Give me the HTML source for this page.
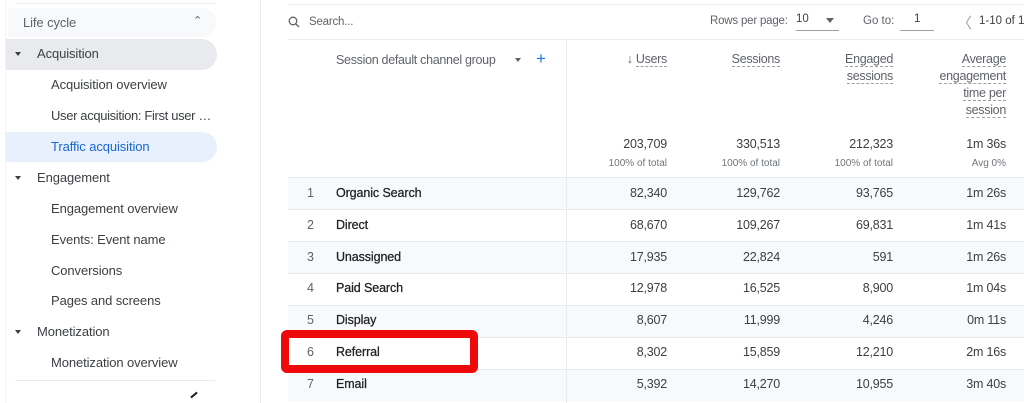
<!DOCTYPE html>
<html><head><meta charset="utf-8"><style>
*{margin:0;padding:0;box-sizing:border-box}
body{width:1024px;height:403px;overflow:hidden;background:#fff;font-family:"Liberation Sans",sans-serif;color:#202124;position:relative}
.a{position:absolute;white-space:nowrap}
.side{font-size:13px;color:#3c4043;letter-spacing:-0.1px}
.n{font-size:12.5px;color:#3c4043;text-align:right;letter-spacing:-0.2px}
.lb{font-size:12.5px;color:#202124;letter-spacing:-0.1px;-webkit-text-stroke:0.25px #202124}
.h{font-size:12.5px;color:#5f6368;text-align:right;line-height:17px;letter-spacing:-0.3px}
.h span{border-bottom:1px dashed #9aa0a6}
.s{font-size:10px;color:#70757a;text-align:right}
.row{position:absolute;left:288px;width:736px;height:32px;border-top:1px solid #e8eaed}
.row.g{background:#f8f9fa}
</style></head><body>
<!-- sidebar -->
<div class="a" style="left:15px;top:3px;width:200px;height:1px;background:#eceff1"></div>
<div class="a" style="left:8px;top:8px;width:208px;height:29px;background:#f8f9fa;border-radius:0 14px 14px 0"></div>
<div class="a side" style="left:23px;top:15px;color:#5f6368">Life cycle</div>
<div class="a" style="left:193px;top:14px;font-size:11px;color:#5f6368">&#8963;</div>
<div class="a" style="left:5px;top:39px;width:212px;height:31px;background:#e8eaed;border-radius:0 16px 16px 0"></div>
<div class="a" style="left:15px;top:52px;border-left:3.5px solid transparent;border-right:3.5px solid transparent;border-top:4px solid #3c4043"></div>
<div class="a side" style="left:37px;top:46px">Acquisition</div>
<div class="a side" style="left:51px;top:77px">Acquisition overview</div>
<div class="a side" style="left:51px;top:108px;letter-spacing:-0.35px">User acquisition: First user …</div>
<div class="a" style="left:5px;top:132px;width:212px;height:30px;background:#e8f0fe;border-radius:0 15px 15px 0"></div>
<div class="a side" style="left:51px;top:139px;color:#1967d2">Traffic acquisition</div>
<div class="a" style="left:15px;top:176px;border-left:3.5px solid transparent;border-right:3.5px solid transparent;border-top:4px solid #3c4043"></div>
<div class="a side" style="left:37px;top:170px">Engagement</div>
<div class="a side" style="left:51px;top:201px">Engagement overview</div>
<div class="a side" style="left:51px;top:232px">Events: Event name</div>
<div class="a side" style="left:51px;top:263px">Conversions</div>
<div class="a side" style="left:51px;top:293px">Pages and screens</div>
<div class="a" style="left:15px;top:330px;border-left:3.5px solid transparent;border-right:3.5px solid transparent;border-top:4px solid #3c4043"></div>
<div class="a side" style="left:37px;top:324px">Monetization</div>
<div class="a side" style="left:51px;top:355px">Monetization overview</div>
<div class="a" style="left:15px;top:380px;width:200px;height:1px;background:#e8eaed"></div>
<div class="a" style="left:190px;top:394px;width:8px;height:2px;background:#202124;transform:rotate(-40deg)"></div>
<div class="a" style="left:5px;top:0;width:1px;height:403px;background:#f1f3f4"></div>
<div class="a" style="left:260px;top:0;width:1px;height:403px;background:#e8eaed"></div>
<!-- top bar -->
<div class="a" style="left:288px;top:4px;width:736px;height:1px;background:#eceff1"></div>
<svg class="a" style="left:288px;top:16px" width="12" height="12" viewBox="0 0 12 12"><circle cx="5" cy="5" r="3.8" fill="none" stroke="#5f6368" stroke-width="1.3"/><line x1="7.8" y1="7.8" x2="11" y2="11" stroke="#5f6368" stroke-width="1.3"/></svg>
<div class="a" style="left:309px;top:16px;font-size:11.5px;color:#5f6368;letter-spacing:-0.2px">Search...</div>
<div class="a" style="left:710px;top:15px;font-size:11.5px;color:#5f6368;letter-spacing:-0.2px">Rows per page:</div>
<div class="a" style="left:796px;top:13px;font-size:11.5px;color:#3c4043">10</div>
<div class="a" style="left:826px;top:18px;border-left:4px solid transparent;border-right:4px solid transparent;border-top:5px solid #5f6368"></div>
<div class="a" style="left:796px;top:30px;width:43px;height:1px;background:#9aa0a6"></div>
<div class="a" style="left:863px;top:15px;font-size:11.5px;color:#5f6368">Go to:</div>
<div class="a" style="left:914px;top:13px;font-size:11.5px;color:#3c4043">1</div>
<div class="a" style="left:900px;top:30px;width:34px;height:1px;background:#9aa0a6"></div>
<div class="a" style="left:957px;top:12px;font-size:15px;color:#9aa0a6">&#12296;</div>
<div class="a" style="left:979px;top:15px;font-size:11.5px;color:#3c4043">1-10 of 1</div>
<div class="a" style="left:288px;top:39px;width:736px;height:1px;background:#eceff1"></div>
<!-- header -->
<div class="a" style="left:566px;top:40px;width:1px;height:363px;background:#e8eaed"></div>
<div class="a" style="left:336px;top:53px;font-size:12.5px;color:#5f6368;letter-spacing:-0.3px">Session default channel group</div>
<div class="a" style="left:515px;top:58px;border-left:3.5px solid transparent;border-right:3.5px solid transparent;border-top:4px solid #5f6368"></div>
<div class="a" style="left:536px;top:49px;font-size:17px;color:#1a73e8">+</div>
<div class="a h" style="right:357px;top:51px">↓ <span>Users</span></div>
<div class="a h" style="right:244px;top:51px"><span>Sessions</span></div>
<div class="a h" style="right:131px;top:51px"><span>Engaged</span><br><span>sessions</span></div>
<div class="a h" style="right:18px;top:51px"><span>Average</span><br><span>engagement</span><br><span>time per</span><br><span>session</span></div>
<div class="a n" style="right:357px;top:137px">203,709</div>
<div class="a n" style="right:244px;top:137px">330,513</div>
<div class="a n" style="right:131px;top:137px">212,323</div>
<div class="a n" style="right:18px;top:137px">1m 36s</div>
<div class="a s" style="right:357px;top:158px">100% of total</div>
<div class="a s" style="right:244px;top:158px">100% of total</div>
<div class="a s" style="right:131px;top:158px">100% of total</div>
<div class="a s" style="right:18px;top:158px">Avg 0%</div>
<!-- rows -->
<div class="row g" style="top:177px"></div>
<div class="row" style="top:209px"></div>
<div class="row g" style="top:241px"></div>
<div class="row" style="top:273px"></div>
<div class="row g" style="top:305px"></div>
<div class="row" style="top:337px"></div>
<div class="row g" style="top:369px"></div>
<div class="a" style="left:566px;top:177px;width:1px;height:226px;background:#e8eaed"></div>

<div class="a n" style="left:307px;top:186px;color:#5f6368">1</div><div class="a lb" style="left:336px;top:186px">Organic Search</div>
<div class="a n" style="right:357px;top:186px">82,340</div><div class="a n" style="right:244px;top:186px">129,762</div><div class="a n" style="right:131px;top:186px">93,765</div><div class="a n" style="right:18px;top:186px">1m 26s</div>
<div class="a n" style="left:307px;top:218px;color:#5f6368">2</div><div class="a lb" style="left:336px;top:218px">Direct</div>
<div class="a n" style="right:357px;top:218px">68,670</div><div class="a n" style="right:244px;top:218px">109,267</div><div class="a n" style="right:131px;top:218px">69,831</div><div class="a n" style="right:18px;top:218px">1m 41s</div>
<div class="a n" style="left:307px;top:250px;color:#5f6368">3</div><div class="a lb" style="left:336px;top:250px">Unassigned</div>
<div class="a n" style="right:357px;top:250px">17,935</div><div class="a n" style="right:244px;top:250px">22,824</div><div class="a n" style="right:131px;top:250px">591</div><div class="a n" style="right:18px;top:250px">1m 26s</div>
<div class="a n" style="left:307px;top:281px;color:#5f6368">4</div><div class="a lb" style="left:336px;top:281px">Paid Search</div>
<div class="a n" style="right:357px;top:281px">12,978</div><div class="a n" style="right:244px;top:281px">16,525</div><div class="a n" style="right:131px;top:281px">8,900</div><div class="a n" style="right:18px;top:281px">1m 04s</div>
<div class="a n" style="left:307px;top:313px;color:#5f6368">5</div><div class="a lb" style="left:336px;top:313px">Display</div>
<div class="a n" style="right:357px;top:313px">8,607</div><div class="a n" style="right:244px;top:313px">11,999</div><div class="a n" style="right:131px;top:313px">4,246</div><div class="a n" style="right:18px;top:313px">0m 11s</div>
<div class="a n" style="left:307px;top:345px;color:#5f6368">6</div><div class="a lb" style="left:336px;top:345px">Referral</div>
<div class="a n" style="right:357px;top:345px">8,302</div><div class="a n" style="right:244px;top:345px">15,859</div><div class="a n" style="right:131px;top:345px">12,210</div><div class="a n" style="right:18px;top:345px">2m 16s</div>
<div class="a n" style="left:307px;top:377px;color:#5f6368">7</div><div class="a lb" style="left:336px;top:377px">Email</div>
<div class="a n" style="right:357px;top:377px">5,392</div><div class="a n" style="right:244px;top:377px">14,270</div><div class="a n" style="right:131px;top:377px">10,955</div><div class="a n" style="right:18px;top:377px">3m 40s</div>

<div class="a" style="left:281px;top:330px;width:197px;height:43px;border:8px solid #ee0a0a;border-radius:6px"></div>
</body></html>
